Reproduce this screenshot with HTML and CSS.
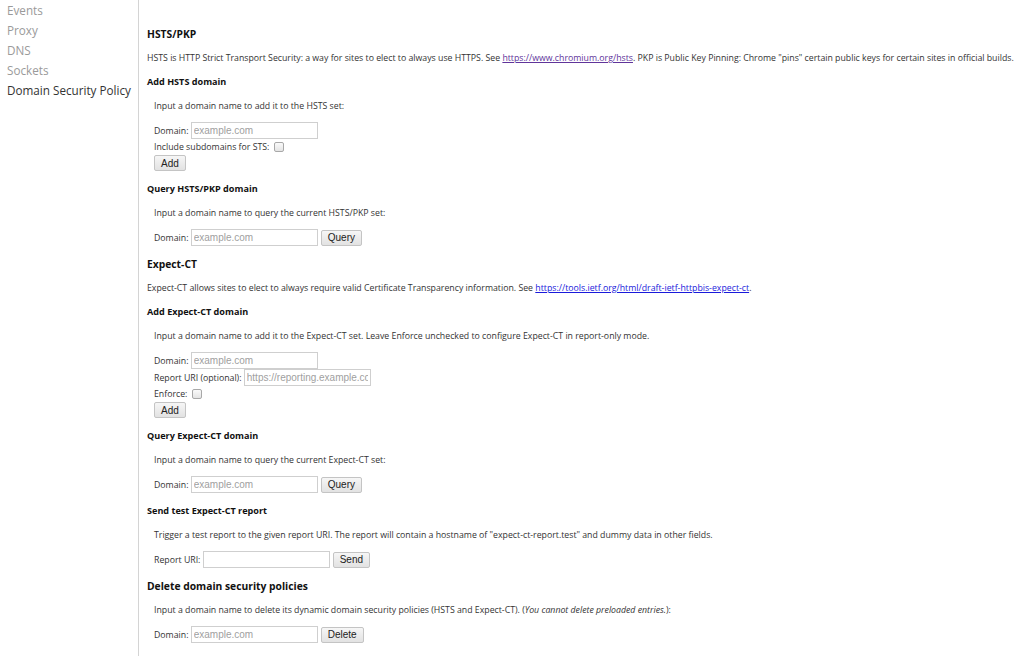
FILE: index.html
```html
<!DOCTYPE html>
<html lang="en">
<head>
    <meta charset="UTF-8">
    <title>net-internals</title>
    <link rel="stylesheet" href="styles.css">
</head>
<body>
    <div class="page">
        <ul class="sidebar">
            <li>Events</li>
            <li>Proxy</li>
            <li>DNS</li>
            <li>Sockets</li>
            <li class="selected">Domain Security Policy</li>
        </ul>

        <div class="main">
            <h2>HSTS/PKP</h2>
            <p>HSTS is HTTP Strict Transport Security: a way for sites to elect to always use HTTPS. See <a href="#" class="visited">https://www.chromium.org/hsts</a>. PKP is Public Key Pinning: Chrome "pins" certain public keys for certain sites in official builds.</p>

            <h3>Add HSTS domain</h3>
            <div class="form">
                <p>Input a domain name to add it to the HSTS set:</p>
                <div class="row">Domain: <input type="text" placeholder="example.com"></div>
                <div class="row">Include subdomains for STS: <input type="checkbox"></div>
                <button>Add</button>
            </div>

            <h3>Query HSTS/PKP domain</h3>
            <div class="form">
                <p>Input a domain name to query the current HSTS/PKP set:</p>
                <div class="row">Domain: <input type="text" placeholder="example.com"><button>Query</button></div>
            </div>

            <h2>Expect-CT</h2>
            <p>Expect-CT allows sites to elect to always require valid Certificate Transparency information. See <a href="#">https://tools.ietf.org/html/draft-ietf-httpbis-expect-ct</a>.</p>

            <h3>Add Expect-CT domain</h3>
            <div class="form">
                <p>Input a domain name to add it to the Expect-CT set. Leave Enforce unchecked to configure Expect-CT in report-only mode.</p>
                <div class="row">Domain: <input type="text" placeholder="example.com"></div>
                <div class="row">Report URI (optional): <input type="text" placeholder="https://reporting.example.com"></div>
                <div class="row">Enforce: <input type="checkbox"></div>
                <button>Add</button>
            </div>

            <h3>Query Expect-CT domain</h3>
            <div class="form">
                <p>Input a domain name to query the current Expect-CT set:</p>
                <div class="row">Domain: <input type="text" placeholder="example.com"><button>Query</button></div>
            </div>

            <h3>Send test Expect-CT report</h3>
            <div class="form">
                <p>Trigger a test report to the given report URI. The report will contain a hostname of "expect-ct-report.test" and dummy data in other fields.</p>
                <div class="row">Report URI: <input type="text"><button>Send</button></div>
            </div>

            <h2>Delete domain security policies</h2>
            <div class="form">
                <p>Input a domain name to delete its dynamic domain security policies (HSTS and Expect-CT). (<i>You cannot delete preloaded entries.</i>):</p>
                <div class="row">Domain: <input type="text" placeholder="example.com"><button>Delete</button></div>
            </div>
        </div>
    </div>
</body>
</html>
```

FILE: styles.css
```css
body {
    margin: 0;
    font-family: "Open Sans", "Noto Sans", sans-serif;
    font-size: 8.75px;
    color: #333;
    background: #fff;
}

.page {
    display: flex;
    min-height: 656px;
}

.sidebar {
    width: 139px;
    flex: none;
    margin: 0;
    padding: 0 0 0 7px;
    box-sizing: border-box;
    border-right: 1px solid #d4d4d4;
    list-style: none;
}

.sidebar li {
    font-size: 11.7px;
    line-height: 20px;
    color: #9a9a9a;
}

.sidebar .selected {
    color: #333;
}

.main {
    padding: 18px 0 0 8px;
    flex: 1;
}

h2 {
    font-size: 10.3px;
    font-weight: bold;
    color: #111;
    line-height: 16px;
    margin: 8px 0;
}

h3 {
    font-size: 9.1px;
    font-weight: bold;
    color: #111;
    line-height: 16px;
    margin: 8px 0;
}

p {
    line-height: 16px;
    margin: 8px 0;
}

.form {
    padding-left: 7px;
    margin-bottom: 10px;
}

.row {
    line-height: 16px;
    display: flex;
    align-items: center;
    white-space: pre;
}

a {
    color: #1a1adb;
}

a.visited {
    color: #60349a;
}

input[type="text"] {
    width: 127px;
    height: 17px;
    box-sizing: border-box;
    border: 1px solid #cfcfcf;
    padding: 0 2px;
    margin: 0;
    font-family: "Liberation Sans", Arial, sans-serif;
    font-size: 10px;
    color: #333;
}

input::placeholder {
    color: #a0a0a0;
}

input[type="checkbox"] {
    appearance: none;
    width: 10px;
    height: 10px;
    margin: 0 0 0 2px;
    border: 1px solid #a8a8a8;
    border-radius: 2px;
    background: linear-gradient(#fafafa, #e4e4e4);
}

button {
    height: 16px;
    padding: 0 6px;
    margin: 0;
    font-family: "Liberation Sans", Arial, sans-serif;
    font-size: 10px;
    color: #222;
    background: linear-gradient(#f6f6f6, #e2e2e2);
    border: 1px solid #c4c4c4;
    border-radius: 2px;
}

.row button {
    margin-left: 3px;
}
```
